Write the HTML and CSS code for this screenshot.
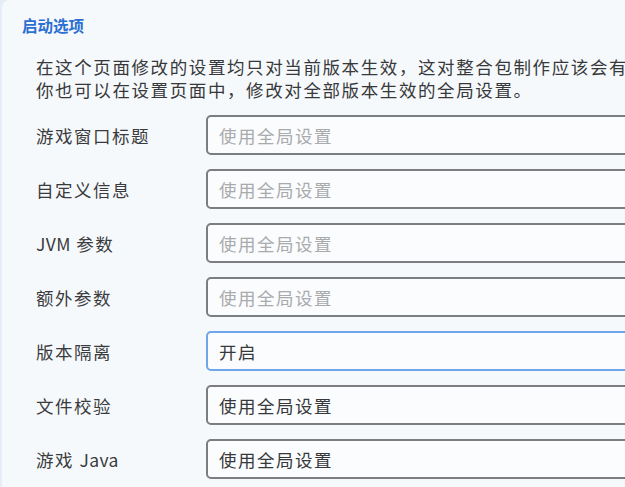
FILE: index.html
```html
<!DOCTYPE html>
<html lang="zh-CN">
<head>
<meta charset="utf-8">
<title>启动选项</title>
<link rel="stylesheet" href="styles.css">
</head>
<body>
<div class="card">
  <div class="title">启动选项</div>
  <div class="desc">
    <div class="line">在这个页面修改的设置均只对当前版本生效，这对整合包制作应该会有用。</div>
    <div class="line">你也可以在设置页面中，修改对全部版本生效的全局设置。</div>
  </div>
  <div class="form">
    <div class="label">游戏窗口标题</div>
    <div class="field placeholder">使用全局设置</div>
    <div class="label">自定义信息</div>
    <div class="field placeholder">使用全局设置</div>
    <div class="label"><span class="latin">JVM</span>&nbsp;参数</div>
    <div class="field placeholder">使用全局设置</div>
    <div class="label">额外参数</div>
    <div class="field placeholder">使用全局设置</div>
    <div class="label">版本隔离</div>
    <div class="field focused">开启</div>
    <div class="label">文件校验</div>
    <div class="field">使用全局设置</div>
    <div class="label">游戏&nbsp;<span class="latin">Java</span></div>
    <div class="field">使用全局设置</div>
  </div>
</div>
</body>
</html>
```

FILE: styles.css
```css
html, body {
  margin: 0;
  padding: 0;
  width: 625px;
  height: 487px;
  overflow: hidden;
  background: #e6edf6;
  font-family: "Noto Sans CJK SC", "Noto Sans", sans-serif;
}
.card {
  margin-left: 2px;
  width: 700px;
  height: 520px;
  background: #f6f9fc;
  border-top-left-radius: 8px;
  padding: 15px 0 0 20px;
  box-sizing: border-box;
}
.title {
  font-size: 15.5px;
  line-height: 21px;
  font-weight: bold;
  color: #2b6fd1;
}
.desc {
  margin-top: 20px;
  margin-left: 14px;
  font-size: 17.5px;
  line-height: 22.5px;
  color: #37383a;
  white-space: nowrap;
  letter-spacing: 1.6px;
}
.form {
  margin-top: 14px;
  margin-left: 14px;
  display: grid;
  grid-template-columns: 170px 460px;
  grid-auto-rows: 40px;
  row-gap: 14px;
}
.label {
  display: flex;
  align-items: center;
  font-size: 17.5px;
  color: #3a3b3d;
  letter-spacing: 1.5px;
  white-space: pre;
}
.latin {
  letter-spacing: 0.4px;
}
.field {
  display: flex;
  align-items: center;
  box-sizing: border-box;
  height: 40px;
  border: 2px solid #7b7d80;
  border-radius: 5px;
  background: #fafcfe;
  padding-left: 11px;
  font-size: 17.5px;
  color: #37383a;
  letter-spacing: 1.5px;
}
.field.placeholder {
  color: #a9aaac;
}
.field.focused {
  border-color: #6fa5ea;
}
```
